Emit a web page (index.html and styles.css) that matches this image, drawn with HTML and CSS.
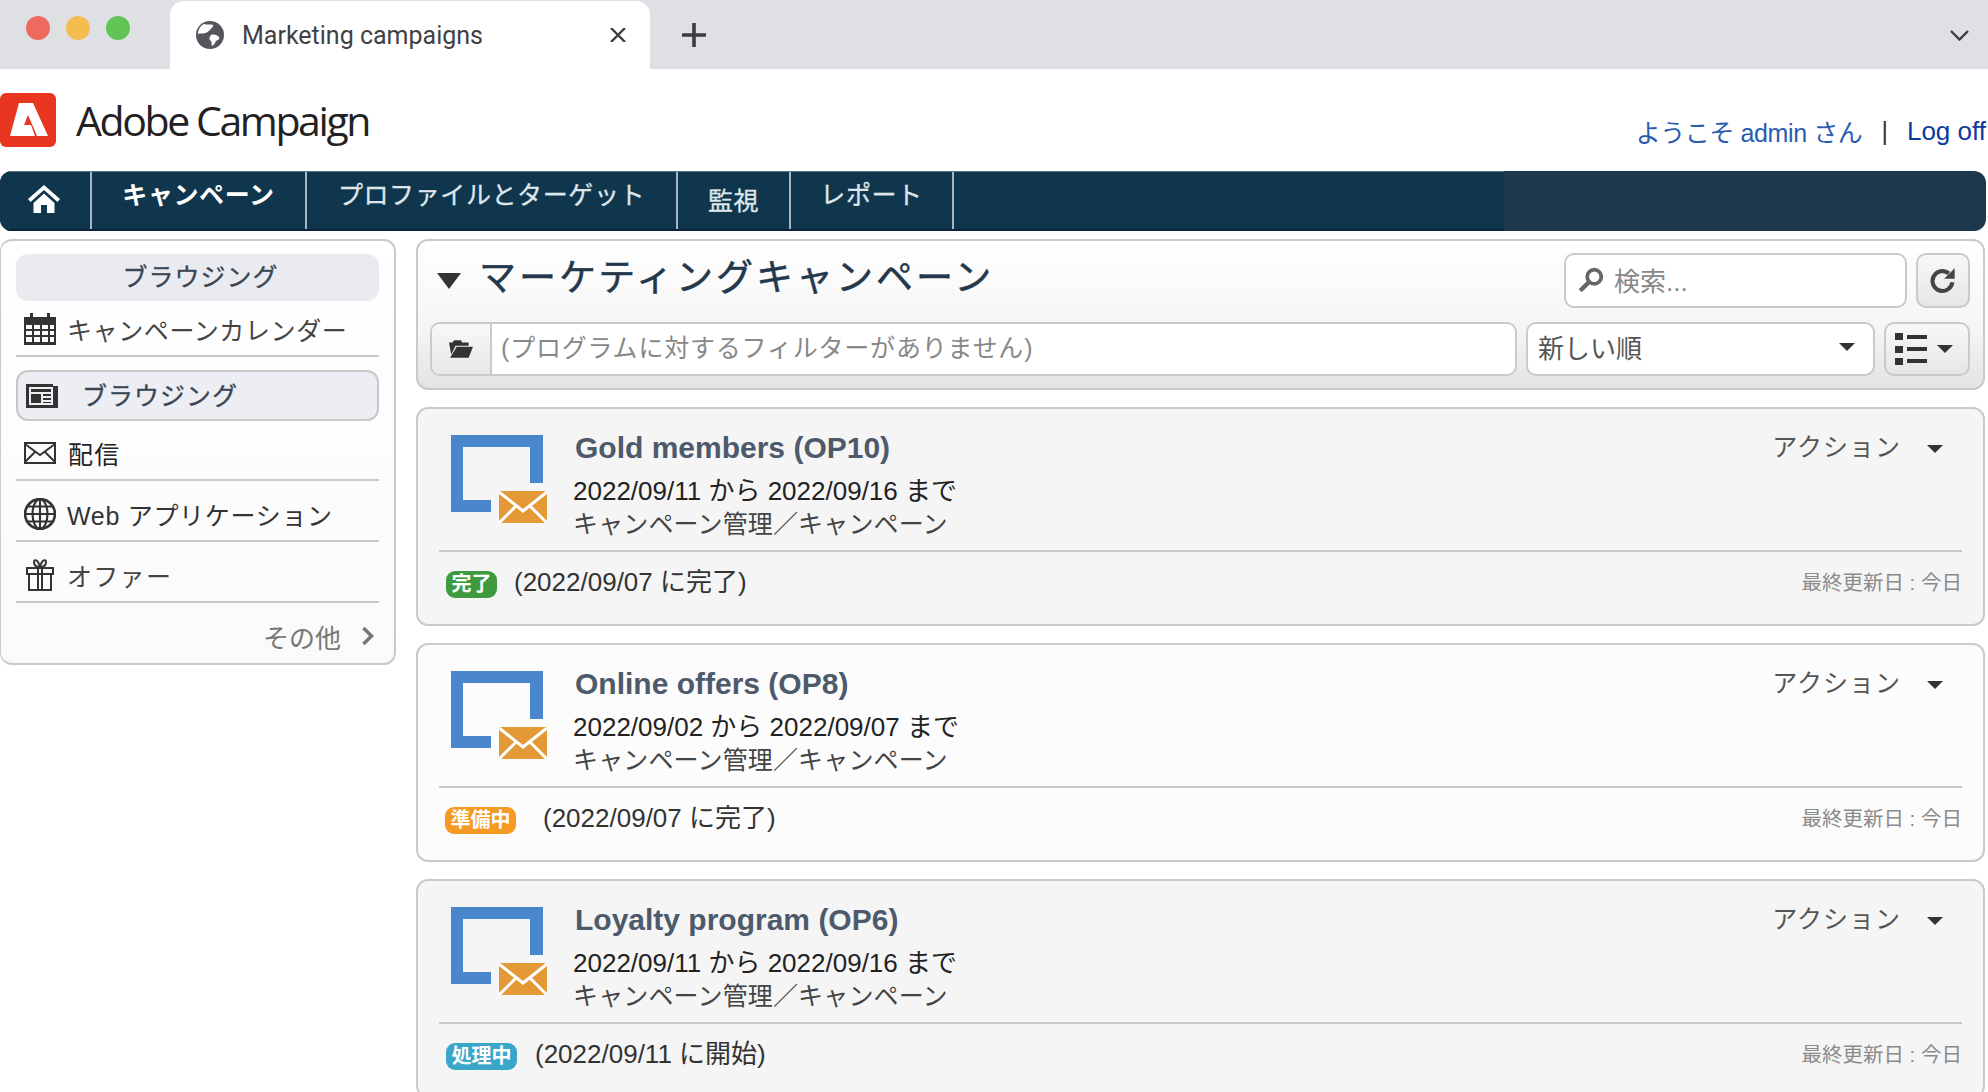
FILE: index.html
```html
<!DOCTYPE html>
<html lang="ja">
<head>
    <meta charset="UTF-8">
    <title>Marketing campaigns</title>
    <link rel="stylesheet" href="styles.css">
</head>
<body>
    <div class="tabbar">
        <div class="lights">
            <span class="light red"></span>
            <span class="light yellow"></span>
            <span class="light green"></span>
        </div>
        <div class="tab">
            <svg class="tab-globe" viewBox="0 0 28 28"><circle cx="14" cy="14" r="14" fill="#54565c"/><path d="M8 3c3 1 7 0 9 1 1 2-2 3-3 5-2 1-3 3-5 3-2 1-5 0-7 1 0-4 2-8 6-10zM15 14c3-1 6 0 8 2 1 2-1 3-3 4-1 2-2 4-4 5-1-2 0-4-1-5-2-1-2-4 0-6z" fill="#fff"/></svg>
            <span class="tab-title">Marketing campaigns</span>
            <svg class="tab-close" viewBox="0 0 16 14"><path d="M1 0l14 14M15 0L1 14" stroke="#3c3d40" stroke-width="2.4" fill="none"/></svg>
        </div>
        <svg class="tab-new" viewBox="0 0 24 24"><path d="M12 0v24M0 12h24" stroke="#3c3d40" stroke-width="3.6" fill="none"/></svg>
        <svg class="tab-more" viewBox="0 0 19 11"><path d="M1 1l8.500 8.500L18 1" stroke="#3c3d40" stroke-width="2.4" fill="none"/></svg>
    </div>

    <div class="header">
        <div class="brand">
            <svg class="brand-mark" viewBox="0 0 56 54"><rect width="56" height="54" rx="6" fill="#e93621"/><path d="M19 10H33L48 43H37L28 22 24 32H31L35 43H10z" fill="#fff"/></svg>
            <span class="brand-name">Adobe Campaign</span>
        </div>
        <div class="user-links">
            <a class="welcome">ようこそ admin さん</a>
            <span class="pipe">|</span>
            <a class="logoff">Log off</a>
        </div>
    </div>

    <div class="nav">
        <div class="nav-items">
            <div class="nav-item home">
                <svg class="home-icon" viewBox="0 0 32 28"><path d="M16 0L0 14l2.500 3L16 5l13.500 12 2.500-3zM5.500 18v10H13v-8h6v8h7.500V18L16 8.500z" fill="#fff"/></svg>
            </div>
            <div class="nav-item active w-campaign">キャンペーン</div>
            <div class="nav-item w-profile">プロファイルとターゲット</div>
            <div class="nav-item low w-watch">監視</div>
            <div class="nav-item w-report">レポート</div>
        </div>
    </div>

    <div class="main">
        <aside class="sidebar">
            <div class="side-title">ブラウジング</div>
            <div class="side-item calendar">
                <svg class="side-icon" viewBox="0 0 32 32"><path d="M0 4h6V0h3v4h14V0h3v4h6v28H0z" fill="#333"/><path d="M2 12h6v4H2zM10 12h6v4h-6zM18 12h6v4h-6zM26 12h4v4h-4zM2 18h6v4H2zM10 18h6v4h-6zM18 18h6v4h-6zM26 18h4v4h-4zM2 24h6v5H2zM10 24h6v5h-6zM18 24h6v5h-6zM26 24h4v5h-4z" fill="#fff"/></svg>
                <span>キャンペーンカレンダー</span>
            </div>
            <div class="side-item selected">
                <svg class="side-icon news" viewBox="0 0 32 24"><path d="M0 0h27v2h5v22H0z" fill="#333"/><path d="M3 3h24v18H3z" fill="#eceef3"/><path d="M5 5h20v3H5zM5 10h10v9H5zM17 10h8v2h-8zM17 14h8v2h-8zM17 18h8v1h-8z" fill="#333"/></svg>
                <span>ブラウジング</span>
            </div>
            <div class="side-item mail">
                <svg class="side-icon" viewBox="0 0 32 22"><rect x="1" y="1" width="30" height="20" fill="none" stroke="#333" stroke-width="2"/><path d="M1 2l15 11L31 2M1 20l10-10M31 20L21 10" fill="none" stroke="#333" stroke-width="2"/></svg>
                <span>配信</span>
            </div>
            <div class="side-item web">
                <svg class="side-icon" viewBox="0 0 30 30"><circle cx="15" cy="15" r="14" fill="none" stroke="#333" stroke-width="2.5"/><ellipse cx="15" cy="15" rx="7" ry="14" fill="none" stroke="#333" stroke-width="2"/><path d="M15 1v28M1 15h28M3 8h24M3 22h24" stroke="#333" stroke-width="2" fill="none"/></svg>
                <span>Web アプリケーション</span>
            </div>
            <div class="side-item offer">
                <svg class="side-icon gift" viewBox="0 0 28 32"><path d="M14 8C10 8 8 6 8 3s4-3 6 5c2-8 6-8 6-5s-2 5-6 5z" fill="none" stroke="#333" stroke-width="2"/><path d="M1 9h26v6H1zM3 15h22v16H3zM12 9v22M16 9v22" fill="none" stroke="#333" stroke-width="2"/></svg>
                <span>オファー</span>
            </div>
            <div class="side-more">
                <span>その他</span>
                <svg class="more-arrow" viewBox="0 0 14 20"><path d="M2.500 2l8 8-8 8" stroke="#777" stroke-width="3.5" fill="none"/></svg>
            </div>
        </aside>

        <section class="content">
            <div class="toolbar">
                <div class="toolbar-top">
                    <svg class="title-arrow" viewBox="0 0 24 16"><path d="M0 0h24L12 16z" fill="#333"/></svg>
                    <h1 class="page-title">マーケティングキャンペーン</h1>
                    <div class="search">
                        <svg class="search-icon" viewBox="0 0 24 24"><circle cx="15" cy="9" r="6.5" fill="none" stroke="#666" stroke-width="3.5"/><path d="M10 14l-8 8" stroke="#666" stroke-width="4"/></svg>
                        <span>検索...</span>
                    </div>
                    <div class="refresh">
                        <svg class="refresh-icon" viewBox="0 0 24 24"><path d="M20 13a8.500 8.500 0 1 1-3-7.500" fill="none" stroke="#444" stroke-width="3.5"/><path d="M22 1v9h-9z" fill="#444"/></svg>
                    </div>
                </div>
                <div class="toolbar-bottom">
                    <div class="filter">
                        <div class="filter-btn">
                            <svg class="folder-icon" viewBox="0 0 22 18"><path d="M0 3h3l2-2h6l1 2h6v3H6L2 14z" fill="#333"/><path d="M7 7h15l-4 10H1z" fill="#333"/></svg>
                        </div>
                        <div class="filter-text">(プログラムに対するフィルターがありません)</div>
                    </div>
                    <div class="sort">
                        <span>新しい順</span>
                        <span class="caret"></span>
                    </div>
                    <div class="view-btn">
                        <svg class="list-icon" viewBox="0 0 32 32"><path d="M0 0h8v7H0zM0 13h8v7H0zM0 25h8v7H0zM12 2h20v4H12zM12 14h20v4H12zM12 26h20v4H12z" fill="#333"/></svg>
                        <span class="caret"></span>
                    </div>
                </div>
            </div>

            <article class="card grey">
                <div class="card-top">
                    <svg class="card-icon" viewBox="0 0 96 88"><path d="M0 0h92v48H79V12H12v53h28v12H0z" fill="#4a86cc"/><path d="M48 56h48v32H48z" fill="#e39a36"/><path d="M48 57l24 19 24-19M48 88l17-17M96 88L79 71" stroke="#fff" stroke-width="3" fill="none"/></svg>
                    <div class="card-body">
                        <h2 class="card-title">Gold members (OP10)</h2>
                        <div class="card-dates">2022/09/11 から 2022/09/16 まで</div>
                        <div class="card-path">キャンペーン管理／キャンペーン</div>
                    </div>
                    <div class="card-action"><span>アクション</span><span class="caret"></span></div>
                </div>
                <div class="card-foot">
                    <span class="badge done">完了</span>
                    <span class="foot-status">(2022/09/07 に完了)</span>
                    <span class="foot-date">最終更新日 : 今日</span>
                </div>
            </article>

            <article class="card">
                <div class="card-top">
                    <svg class="card-icon" viewBox="0 0 96 88"><path d="M0 0h92v48H79V12H12v53h28v12H0z" fill="#4a86cc"/><path d="M48 56h48v32H48z" fill="#e39a36"/><path d="M48 57l24 19 24-19M48 88l17-17M96 88L79 71" stroke="#fff" stroke-width="3" fill="none"/></svg>
                    <div class="card-body">
                        <h2 class="card-title">Online offers (OP8)</h2>
                        <div class="card-dates">2022/09/02 から 2022/09/07 まで</div>
                        <div class="card-path">キャンペーン管理／キャンペーン</div>
                    </div>
                    <div class="card-action"><span>アクション</span><span class="caret"></span></div>
                </div>
                <div class="card-foot">
                    <span class="badge prep">準備中</span>
                    <span class="foot-status">(2022/09/07 に完了)</span>
                    <span class="foot-date">最終更新日 : 今日</span>
                </div>
            </article>

            <article class="card grey">
                <div class="card-top">
                    <svg class="card-icon" viewBox="0 0 96 88"><path d="M0 0h92v48H79V12H12v53h28v12H0z" fill="#4a86cc"/><path d="M48 56h48v32H48z" fill="#e39a36"/><path d="M48 57l24 19 24-19M48 88l17-17M96 88L79 71" stroke="#fff" stroke-width="3" fill="none"/></svg>
                    <div class="card-body">
                        <h2 class="card-title">Loyalty program (OP6)</h2>
                        <div class="card-dates">2022/09/11 から 2022/09/16 まで</div>
                        <div class="card-path">キャンペーン管理／キャンペーン</div>
                    </div>
                    <div class="card-action"><span>アクション</span><span class="caret"></span></div>
                </div>
                <div class="card-foot">
                    <span class="badge running">処理中</span>
                    <span class="foot-status">(2022/09/11 に開始)</span>
                    <span class="foot-date">最終更新日 : 今日</span>
                </div>
            </article>
        </section>
    </div>
</body>
</html>
```

FILE: styles.css
```css
* { margin: 0; padding: 0; box-sizing: border-box; }
html, body { height: 1092px; overflow: hidden; }
body { font-family: "Liberation Sans", "Noto Sans CJK JP", sans-serif; background: white; color: #333; }

/* browser chrome */
.tabbar { height: 69px; background: #dfe0e4; display: flex; align-items: flex-start; position: relative; }
.lights { display: flex; gap: 16px; padding: 16px 0 0 26px; width: 170px; flex: none; }
.light { width: 24px; height: 24px; border-radius: 50%; }
.light.red { background: #ee6a5f; }
.light.yellow { background: #f5bd4f; }
.light.green { background: #61c454; }
.tab { margin-top: 1px; width: 480px; height: 68px; background: white; border-radius: 14px 14px 0 0; display: flex; align-items: center; padding: 0 24px 0 26px; flex: none; }
.tab-globe { width: 28px; height: 28px; flex: none; }
.tab-title { font-family: Roboto, sans-serif; font-size: 25px; color: #3f4145; margin-left: 18px; flex: 1; }
.tab-close { width: 16px; height: 14px; flex: none; }
.tab-new { width: 24px; height: 24px; margin: 23px 0 0 32px; flex: none; }
.tab-more { width: 19px; height: 11px; position: absolute; right: 19px; top: 30px; }

/* logo + user */
.header { height: 102px; display: flex; justify-content: space-between; padding-top: 24px; }
.brand { display: flex; align-items: flex-start; height: 56px; }
.brand-mark { width: 56px; height: 54px; flex: none; }
.brand-name { font-family: "Open Sans", sans-serif; font-size: 41px; line-height: 54px; color: #222; margin-left: 20px; letter-spacing: -2.4px; }
.user-links { display: flex; align-items: center; height: 36px; margin-top: 20px; padding-right: 2px; font-size: 25px; }
.welcome { color: #2a5cb0; letter-spacing: -0.4px; }
.pipe { margin: 0 19px; color: #333; }
.logoff { color: #0b3a9c; font-size: 26px; }

/* nav */
.nav { height: 60px; margin-right: 2px; background: #1d374c; border-radius: 12px; overflow: hidden; }
.nav-items { width: 1504px; height: 100%; background: #10364d; display: flex; border-bottom: 2px solid #082438; border-top: 1px solid #5c7486; }
.nav-item { flex: none; color: #dfe6ec; font-size: 25px; letter-spacing: 0.6px; border-right: 2px solid #aab6bf; padding-top: 3px; text-align: center; -webkit-text-stroke: 0.3px #dfe6ec; }
.nav-item.home { width: 92px; letter-spacing: 0; display: flex; justify-content: center; padding-top: 13px; padding-right: 3px; }
.home-icon { width: 32px; height: 28px; }
.nav-item.active { color: white; font-weight: bold; -webkit-text-stroke: 0; }
.nav-item.low { padding-top: 9px; }
.w-campaign { width: 215px; }
.w-profile { width: 371px; }
.w-watch { width: 113px; }
.w-report { width: 163px; }

/* layout */
.main { display: flex; align-items: flex-start; gap: 20px; margin-top: 8px; padding-right: 3px; }

/* sidebar */
.sidebar { width: 396px; flex: none; border: 2px solid #cacaca; border-left-width: 1px; border-radius: 12px; padding: 13px 15px 10px 15px; background: linear-gradient(#fff, #fafafa); }
.side-title { height: 47px; background: #e9ebf1; border-radius: 12px; text-align: center; font-size: 25px; line-height: 46px; color: #3b4654; letter-spacing: 1px; padding-left: 6px; -webkit-text-stroke: 0.3px #3b4654; }
.side-item { height: 61px; display: flex; align-items: center; border-bottom: 2px solid #c8c8c8; font-size: 25px; color: #444; letter-spacing: 1.3px; padding: 6px 0 0 8px; }
.side-item.calendar { height: 56px; letter-spacing: 0.6px; padding-top: 2px; }
.side-item.selected { height: 51px; margin-top: 13px; background: #eceef3; border: 2px solid #c8c8c8; border-radius: 12px; color: #3b4654; padding: 0 0 3px 8px; letter-spacing: 1px; -webkit-text-stroke: 0.3px #3b4654; }
.side-item.selected .side-icon { margin-top: 3px; }
.side-item.mail { height: 60px; color: #222; }
.side-icon { width: 32px; height: 32px; flex: none; margin-right: 11px; }
.side-icon.news { height: 24px; margin-right: 24px; }
.side-item.mail .side-icon { height: 22px; margin-right: 12px; }
.side-item.web { letter-spacing: 0.7px; color: #333; }
.side-icon.gift { width: 28px; margin: 0 13px 0 2px; }
.side-more { display: flex; justify-content: flex-end; align-items: center; gap: 20px; height: 34px; margin-top: 16px; padding-right: 4px; color: #777; font-size: 26px; }
.more-arrow { width: 14px; height: 20px; }

/* toolbar */
.content { flex: 1; display: flex; flex-direction: column; gap: 17px; min-width: 0; }
.toolbar { height: 151px; border: 2px solid #cacaca; border-radius: 12px; background: linear-gradient(#fff 0%, #f5f5f5 60%, #e3e3e3 100%); padding: 10px 13px 0 12px; }
.toolbar-top { display: flex; align-items: flex-start; height: 71px; }
.title-arrow { width: 24px; height: 16px; margin: 22px 0 0 7px; flex: none; }
.page-title { font-size: 37px; font-weight: normal; color: #24384b; letter-spacing: 3px; margin: 5px 0 0 18px; line-height: 46px; flex: 1; -webkit-text-stroke: 0.5px #24384b; }
.search { width: 343px; height: 55px; border: 2px solid #cacaca; border-radius: 10px; background: white; display: flex; align-items: center; padding: 0 0 2px 12px; margin-top: 2px; color: #888; font-size: 26px; }
.search-icon { width: 26px; height: 26px; margin-right: 10px; }
.refresh { width: 54px; height: 55px; margin: 2px 0 0 9px; border: 2px solid #cacaca; border-radius: 10px; background: linear-gradient(#f8f8f8, #e6e6e6); display: flex; align-items: center; justify-content: center; }
.refresh-icon { width: 28px; height: 28px; }
.toolbar-bottom { display: flex; gap: 9px; }
.filter { flex: 1; height: 54px; border: 2px solid #cacaca; border-radius: 10px; display: flex; overflow: hidden; background: white; }
.filter-btn { width: 60px; background: linear-gradient(#f8f8f8, #e8e8e8); border-right: 2px solid #cacaca; display: flex; align-items: center; justify-content: center; flex: none; }
.folder-icon { width: 24px; height: 20px; }
.filter-text { color: #888; font-size: 25px; line-height: 48px; padding-left: 9px; letter-spacing: 0.8px; }
.sort { width: 349px; height: 54px; border: 2px solid #cacaca; border-radius: 10px; background: white; display: flex; align-items: center; justify-content: space-between; padding: 0 18px 5px 10px; font-size: 26px; color: #555; }
.view-btn { width: 86px; height: 54px; border: 2px solid #cacaca; border-radius: 10px; background: linear-gradient(#f8f8f8, #e6e6e6); display: flex; align-items: center; padding-left: 9px; gap: 10px; }
.list-icon { width: 32px; height: 32px; }
.caret { display: inline-block; width: 0; height: 0; border-left: 8px solid transparent; border-right: 8px solid transparent; border-top: 8px solid #333; }

/* campaign cards */
.card { height: 219px; border: 2px solid #cacaca; border-radius: 12px; background: #fcfcfc; padding: 26px 21px 0 21px; }
.card.grey { background: #f5f5f5; }
.card-top { display: flex; height: 117px; border-bottom: 2px solid #c8c8c8; }
.card-icon { width: 96px; height: 88px; flex: none; margin-left: 12px; }
.card-body { flex: 1; margin: -3px 0 0 26px; }
.card-title { font-size: 30px; font-weight: bold; color: #4d5a6b; line-height: 32px; margin-left: 2px; }
.card-dates { font-size: 26px; color: #222; line-height: 30px; margin-top: 12px; }
.card-path { font-size: 25px; color: #444; line-height: 35px; margin-top: 1px; letter-spacing: 0.15px; }
.card-action { display: flex; align-items: flex-start; gap: 26px; font-size: 25px; color: #555; letter-spacing: 1px; padding-right: 19px; margin-top: -3px; line-height: 30px; }
.card-action .caret { margin-top: 13px; }
.card-foot { display: flex; align-items: center; height: 58px; }
.badge { color: white; font-size: 20px; font-weight: bold; border-radius: 9px; height: 27px; line-height: 27px; margin-top: 6px; text-align: center; flex: none; }
.badge.done { background: #3f9a3f; width: 51px; margin-left: 7px; }
.badge.prep { background: #f59a23; width: 71px; margin-left: 6px; }
.badge.running { background: #3aa6c9; width: 71px; margin-left: 7px; }
.foot-status { font-size: 26px; color: #333; margin-left: 17px; margin-top: -3px; }
.badge.prep + .foot-status { margin-left: 27px; }
.badge.running + .foot-status { margin-left: 18px; }
.foot-date { margin-left: auto; font-size: 20.5px; color: #8a8a8a; }
```
